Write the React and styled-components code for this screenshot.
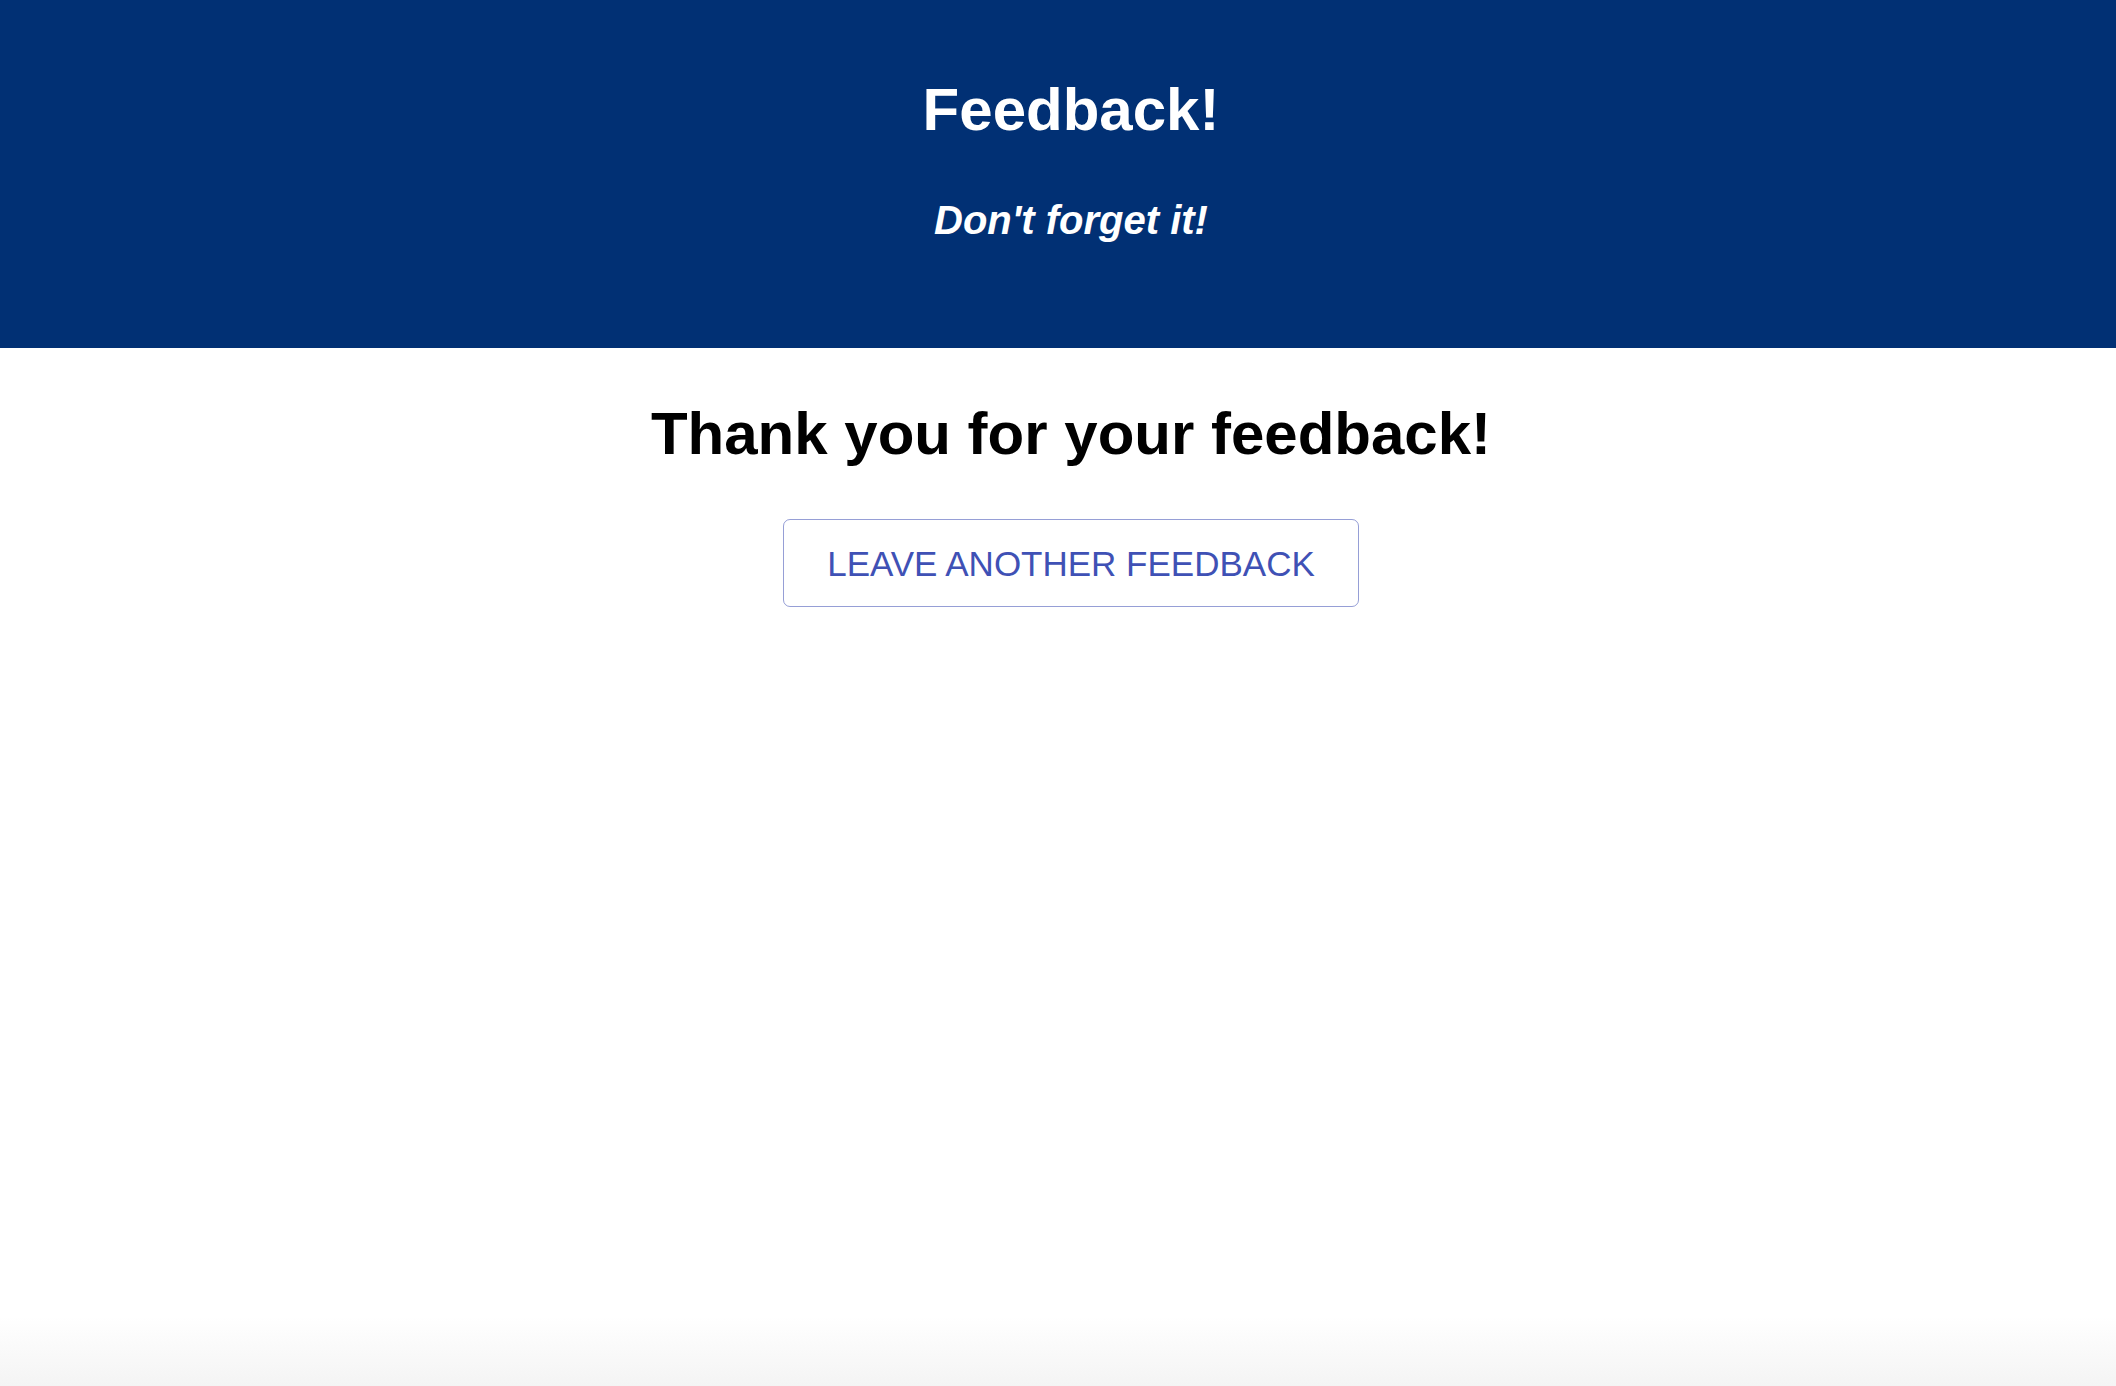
import React from "react";
import styled, { createGlobalStyle } from "styled-components";

const GlobalStyle = createGlobalStyle`
  html, body {
    margin: 0;
    padding: 0;
  }
  body {
    font-family: "Liberation Sans", Arial, Helvetica, sans-serif;
    background: #ffffff;
  }
`;

const Page = styled.div`
  min-height: 100vh;
  display: flex;
  flex-direction: column;
  background: linear-gradient(
    to bottom,
    #ffffff 0,
    #ffffff calc(100% - 70px),
    #f4f4f4 100%
  );
`;

const Header = styled.header`
  background: #013074;
  color: #ffffff;
  text-align: center;
  padding: 80px 0 108px 26px;
  display: flex;
  flex-direction: column;
  align-items: center;
  gap: 60px;
`;

const Title = styled.h1`
  margin: 0;
  font-size: 60px;
  line-height: 60px;
  font-weight: 700;
`;

const Subtitle = styled.h2`
  margin: 0;
  font-size: 40px;
  line-height: 40px;
  font-weight: 700;
  font-style: italic;
`;

const Main = styled.main`
  display: flex;
  flex-direction: column;
  align-items: center;
  padding: 56px 0 0 26px;
  gap: 55px;
`;

const Heading = styled.h2`
  margin: 0;
  font-size: 60px;
  line-height: 60px;
  font-weight: 700;
  color: #000000;
`;

const OutlinedButton = styled.button`
  font-family: "Liberation Sans", Arial, Helvetica, sans-serif;
  font-size: 35px;
  line-height: 1.75;
  font-weight: 400;
  text-transform: uppercase;
  color: #3f51b5;
  background: transparent;
  border: 1.5px solid rgba(63, 81, 181, 0.55);
  border-radius: 7px;
  padding: 13px 43px 12px;
  cursor: pointer;
`;

export default function App() {
  return (
    <>
      <GlobalStyle />
      <Page>
        <Header>
          <Title>Feedback!</Title>
          <Subtitle>Don't forget it!</Subtitle>
        </Header>
        <Main>
          <Heading>Thank you for your feedback!</Heading>
          <OutlinedButton type="button">Leave another feedback</OutlinedButton>
        </Main>
      </Page>
    </>
  );
}
